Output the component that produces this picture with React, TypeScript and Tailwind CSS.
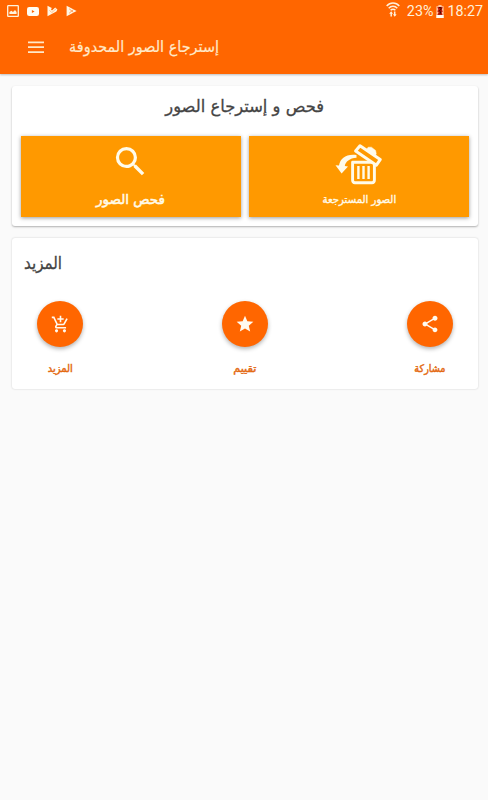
import React from 'react';
import { MdAddShoppingCart, MdSearch, MdShare, MdStar } from 'react-icons/md';

const ACTIONS = [
  { id: 'more', label: 'المزيد', icon: <MdAddShoppingCart size={19} />, labelScale: 'scale-x-[0.95]' },
  { id: 'rate', label: 'تقييم', icon: <MdStar size={20} />, labelScale: 'scale-x-[1.08]' },
  { id: 'share', label: 'مشاركة', icon: <MdShare size={20} />, labelScale: 'scale-x-[0.92]' },
];

const PictureIcon = () => (
  <svg width="12" height="12" viewBox="0 0 12 12" fill="none">
    <rect x="0.7" y="0.7" width="10.6" height="10.6" rx="0.6" stroke="#fff3dc" strokeWidth="1.3" />
    <path d="M2.4 9V7L4.4 5.8L6 7L8 5L9.6 7V9Z" fill="#fff3dc" />
  </svg>
);

const VideoIcon = () => (
  <svg width="12" height="9" viewBox="0 0 12 9">
    <rect width="12" height="9" rx="2.2" fill="#fffdf4" />
    <path d="M4.9 2.9L7.6 4.5L4.9 6.1Z" fill="#ff6600" />
  </svg>
);

const PlayCheckIcon = () => (
  <svg width="11" height="12" viewBox="0 0 11 12">
    <path d="M0.5 0.8L4.8 3.1L4 4.6L5 5.6L8.2 2.6L10.4 4.6L9.4 6.4L0.5 11.2Z" fill="#fff6e4" />
    <path d="M2.4 5.2L4.8 7.6L9 3.8" fill="none" stroke="#ff9a50" strokeWidth="0.6" />
  </svg>
);

const PlayIcon = () => (
  <svg width="11" height="12" viewBox="0 0 11 12">
    <path d="M0.6 0.8L10.6 6L0.6 11.2Z" fill="#fff6e4" />
    <path d="M3.2 3.8L7.4 7.4M3.2 8.2L7.4 4.6" stroke="#ff8a3a" strokeWidth="0.8" />
  </svg>
);

const WifiIcon = () => (
  <svg width="14" height="15" viewBox="0 0 14 15" fill="none" stroke="#fff0da" strokeWidth="1.5">
    <path d="M0.7 4.1C4.2 0.1 9.8 0.1 13.3 4.1" />
    <path d="M2.7 6.3C5.1 3.6 8.9 3.6 11.3 6.3" />
    <path d="M4.6 8.3C6 6.8 8 6.8 9.4 8.3" />
    <path d="M5.2 14.5V10.5M8.7 9.5V13.5" strokeWidth="1.5" />
    <path d="M3.2 11.8L5.2 9.3L7 11.8ZM7 12.3L8.7 14.8L10.6 12.3Z" fill="#fff0da" stroke="none" />
  </svg>
);

const BatteryIcon = () => (
  <svg width="8" height="13" viewBox="0 0 8 13">
    <path d="M2.4 0H5.6V1.2H7.6V13H0.4V1.2H2.4Z" fill="#ffc3a0" />
    <rect x="0.4" y="10" width="7.2" height="3" fill="#fffaf0" />
    <path d="M1.4 2H6.6L5.9 5L7 6.4L5.6 7.1L6.6 10H1.3L2.6 7.4L1.2 6.2L2.3 4.8Z" fill="#b81c0c" />
    <path d="M3 2.6H5V4.3L3.3 5.8L4.8 7L4.1 8.8" fill="none" stroke="#3d0903" strokeWidth="1" />
  </svg>
);

const MenuIcon = () => (
  <svg width="22" height="12" viewBox="0 0 22 12">
    <path d="M3 1.3H19M3 6.2H19M3 11.1H19" stroke="#ffe9c9" strokeWidth="1.8" />
  </svg>
);

// Bin with an open lid and an arrow curving out of it
const RestoreBinIcon = () => (
  <svg width="48" height="42" viewBox="0 0 48 42" fill="none">
    <path d="M17.6 18.2H39.4V36Q39.4 38.7 37 38.7H20Q17.6 38.7 17.6 36Z" stroke="#fffbea" strokeWidth="2.9" strokeLinejoin="round" />
    <path d="M23.4 22V35M28.5 22V35M33.6 22V35" stroke="#fffbea" strokeWidth="2.4" />
    <path d="M25 1.8L45.2 15.6L41.4 21.2L20.6 7Z" fill="#ff9900" stroke="#fffbea" strokeWidth="3" strokeLinejoin="round" />
    <path d="M31 6L33.2 3.2H36.4L40.6 6.4L41.2 9.4L40.3 12.2Z" fill="#fffbea" stroke="#fffbea" strokeWidth="0.5" strokeLinejoin="round" />
    <path d="M21.5 11C11.5 9.6 5.2 14 4 21.5L0.5 21.2L6.6 29.6L13 22.6L9.8 22C10.6 17.6 14.5 14.3 21.5 13.8Z" fill="#fffbea" />
  </svg>
);

const App: React.FC = () => {
  return (
    <div className="h-[800px] w-[488px] overflow-hidden bg-[#fafafa] font-['DejaVu_Sans',sans-serif]">
      <header className="h-[74px] bg-[#ff6600] shadow-[0_1px_2px_rgba(0,0,0,0.25)]">
        <div className="flex h-[22px] items-center justify-between pl-[7px] pr-[5px]">
          <div className="flex items-center gap-2">
            <PictureIcon />
            <VideoIcon />
            <PlayCheckIcon />
            <PlayIcon />
          </div>
          <div className="flex items-center font-[Roboto,sans-serif] text-[14.3px] leading-[22px] text-[#fff0da]">
            <span className="pb-[3px]"><WifiIcon /></span>
            <span className="ml-[7px]">23%</span>
            <span className="ml-[3px] mr-[3px]"><BatteryIcon /></span>
            <span>18:27</span>
          </div>
        </div>
        <div className="flex h-[50px] items-center pl-[25px] text-[#ffe9c9]">
          <button aria-label="القائمة"><MenuIcon /></button>
          <h1 dir="rtl" className="ml-[22px] flex w-[150px] origin-right scale-x-[0.93] whitespace-nowrap text-[15.5px] leading-6 [-webkit-text-stroke:0.2px]">إسترجاع الصور المحدوفة</h1>
        </div>
      </header>

      <main className="flex flex-col gap-3 pl-3 pt-3 pr-[10px]">
        <section className="h-[140px] rounded-[3px] bg-white px-[9px] shadow-[0_1px_2px_rgba(0,0,0,0.3)]">
          <h2 dir="rtl" className="flex h-[50px] items-center justify-center pb-[9px] text-[17px] text-[#444] [-webkit-text-stroke:0.3px]">
            <span className="scale-x-[0.96] whitespace-nowrap">فحص و إسترجاع الصور</span>
          </h2>
          <div className="grid grid-cols-2 gap-2">
            <button className="flex h-[81px] flex-col items-center bg-[#ff9900] pr-[1px] pt-[6px] text-[#fffbea] shadow-[0_1px_4px_rgba(0,0,0,0.4)]">
              <MdSearch size={39} />
              <span className="mt-[6px] whitespace-nowrap text-[13.5px] leading-6 [-webkit-text-stroke:0.5px]">فحص الصور</span>
            </button>
            <button className="flex h-[81px] flex-col items-center bg-[#ff9900] pt-[8px] text-[#fffbea] shadow-[0_1px_4px_rgba(0,0,0,0.4)]">
              <RestoreBinIcon />
              <span className="mt-[1px] scale-x-[0.96] whitespace-nowrap text-[10.5px] leading-6 [-webkit-text-stroke:0.35px]">الصور المسترجعة</span>
            </button>
          </div>
        </section>

        <section className="h-[151px] rounded-[3px] bg-white px-[25px] shadow-[0_0_2px_rgba(0,0,0,0.2)]">
          <h2 className="-ml-[13px] flex h-[63px] items-center pb-[12px] text-[17px] text-[#444] [-webkit-text-stroke:0.3px]">
            <span className="origin-left scale-x-[0.89]">المزيد</span>
          </h2>
          <div className="flex justify-between">
            {ACTIONS.map((action) => (
              <button key={action.id} className="flex w-[46px] flex-col items-center">
                <span className="flex size-[46px] items-center justify-center rounded-full bg-[#ff6600] text-[#fffaf0] shadow-[0_2px_4px_rgba(0,0,0,0.3)]">
                  {action.icon}
                </span>
                <span className={`mt-[9px] whitespace-nowrap text-[10.5px] leading-6 text-[#e46a12] [-webkit-text-stroke:0.45px] ${action.labelScale}`}>{action.label}</span>
              </button>
            ))}
          </div>
        </section>
      </main>
    </div>
  );
};

export default App;
